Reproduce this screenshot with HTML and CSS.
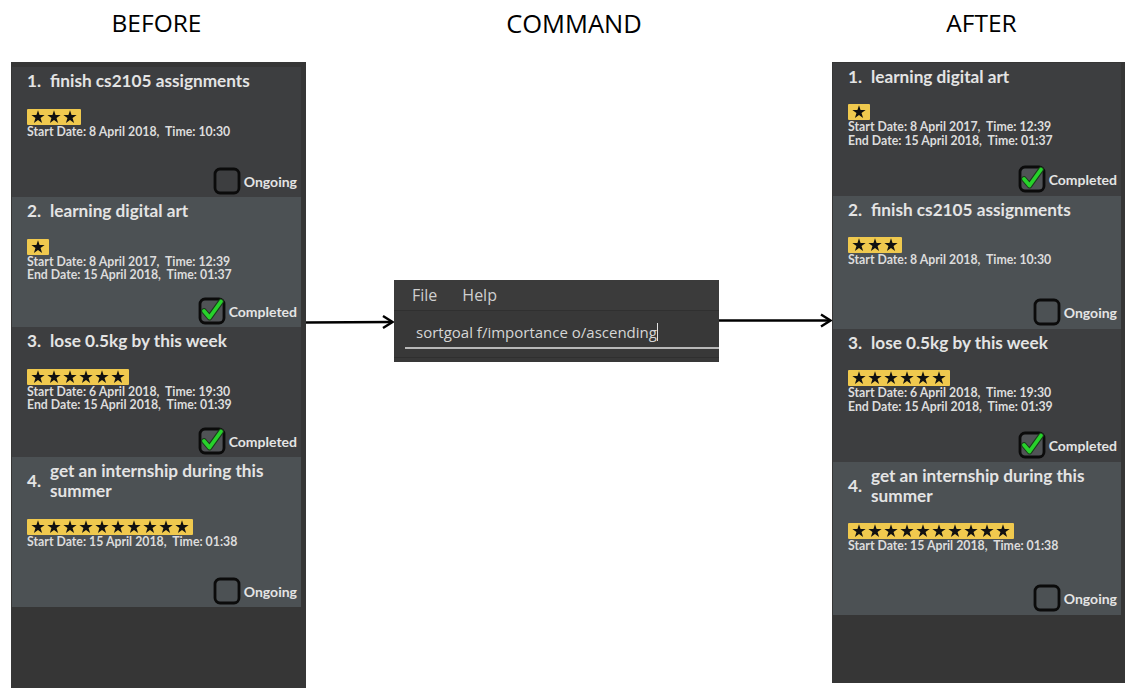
FILE: index.html
```html
<!DOCTYPE html>
<html>
<head>
<meta charset="utf-8">
<link rel="stylesheet" href="styles.css">
</head>
<body>
<svg class="defs" width="0" height="0" aria-hidden="true">
  <symbol id="star" viewBox="-0.6 -0.4 17.2 17.2"><path d="M8 1 L9.69 6.18 L15.13 6.18 L10.73 9.39 L12.41 14.57 L8 11.37 L3.59 14.57 L5.27 9.39 L0.87 6.18 L6.31 6.18 Z"/></symbol>
  <symbol id="box-empty" viewBox="0 0 28 28"><rect class="bx" x="2" y="2" width="24" height="24" rx="5"/></symbol>
  <symbol id="box-done" viewBox="0 0 28 28"><rect class="bx bx-done" x="2" y="2" width="24" height="24" rx="5"/><path class="ck-o" d="M6 14 L11.5 20.5 L23 4.5"/><path class="ck" d="M6 14 L11.5 20.5 L23 4.5"/></symbol>
</svg>
<div class="page">
  <div class="head head-before">BEFORE</div>
  <div class="head head-command">COMMAND</div>
  <div class="head head-after">AFTER</div>

  <div class="panel panel-before">
    <div class="card dark">
      <div class="title"><span class="num">1.</span><span class="name">finish cs2105 assignments</span></div>
      <div class="stars"><svg class="star"><use href="#star"/></svg><svg class="star"><use href="#star"/></svg><svg class="star"><use href="#star"/></svg></div>
      <div class="dates"><div>Start Date: 8 April 2018,&nbsp; Time: 10:30</div></div>
      <div class="status"><svg class="box"><use href="#box-empty"/></svg><span>Ongoing</span></div>
    </div>
    <div class="card light">
      <div class="title"><span class="num">2.</span><span class="name">learning digital art</span></div>
      <div class="stars"><svg class="star"><use href="#star"/></svg></div>
      <div class="dates"><div>Start Date: 8 April 2017,&nbsp; Time: 12:39</div><div>End Date: 15 April 2018,&nbsp; Time: 01:37</div></div>
      <div class="status"><svg class="box"><use href="#box-done"/></svg><span>Completed</span></div>
    </div>
    <div class="card dark">
      <div class="title"><span class="num">3.</span><span class="name">lose 0.5kg by this week</span></div>
      <div class="stars"><svg class="star"><use href="#star"/></svg><svg class="star"><use href="#star"/></svg><svg class="star"><use href="#star"/></svg><svg class="star"><use href="#star"/></svg><svg class="star"><use href="#star"/></svg><svg class="star"><use href="#star"/></svg></div>
      <div class="dates"><div>Start Date: 6 April 2018,&nbsp; Time: 19:30</div><div>End Date: 15 April 2018,&nbsp; Time: 01:39</div></div>
      <div class="status"><svg class="box"><use href="#box-done"/></svg><span>Completed</span></div>
    </div>
    <div class="card light">
      <div class="title"><span class="num">4.</span><span class="name">get an internship during this summer</span></div>
      <div class="stars"><svg class="star"><use href="#star"/></svg><svg class="star"><use href="#star"/></svg><svg class="star"><use href="#star"/></svg><svg class="star"><use href="#star"/></svg><svg class="star"><use href="#star"/></svg><svg class="star"><use href="#star"/></svg><svg class="star"><use href="#star"/></svg><svg class="star"><use href="#star"/></svg><svg class="star"><use href="#star"/></svg><svg class="star"><use href="#star"/></svg></div>
      <div class="dates"><div>Start Date: 15 April 2018,&nbsp; Time: 01:38</div></div>
      <div class="status"><svg class="box"><use href="#box-empty"/></svg><span>Ongoing</span></div>
    </div>
  </div>

  <svg class="arrow arrow-left" viewBox="0 0 88 16"><path d="M0 8.5 L86 8" /><path d="M77 2 L86.5 8 L77 14"/></svg>

  <div class="cmd">
    <div class="menubar"><span>File</span><span>Help</span></div>
    <div class="cmd-input"><span class="cmd-text">sortgoal f/importance o/ascending</span><span class="caret"></span></div>
    <div class="cmd-line"></div>
    <div class="cmd-foot"></div>
  </div>

  <svg class="arrow arrow-right" viewBox="0 0 113 16"><path d="M0 7.5 L111 7.5" /><path d="M102 1.5 L111.5 7.5 L102 13.5"/></svg>

  <div class="panel panel-after">
    <div class="card dark">
      <div class="title"><span class="num">1.</span><span class="name">learning digital art</span></div>
      <div class="stars"><svg class="star"><use href="#star"/></svg></div>
      <div class="dates"><div>Start Date: 8 April 2017,&nbsp; Time: 12:39</div><div>End Date: 15 April 2018,&nbsp; Time: 01:37</div></div>
      <div class="status"><svg class="box"><use href="#box-done"/></svg><span>Completed</span></div>
    </div>
    <div class="card light">
      <div class="title"><span class="num">2.</span><span class="name">finish cs2105 assignments</span></div>
      <div class="stars"><svg class="star"><use href="#star"/></svg><svg class="star"><use href="#star"/></svg><svg class="star"><use href="#star"/></svg></div>
      <div class="dates"><div>Start Date: 8 April 2018,&nbsp; Time: 10:30</div></div>
      <div class="status"><svg class="box"><use href="#box-empty"/></svg><span>Ongoing</span></div>
    </div>
    <div class="card dark">
      <div class="title"><span class="num">3.</span><span class="name">lose 0.5kg by this week</span></div>
      <div class="stars"><svg class="star"><use href="#star"/></svg><svg class="star"><use href="#star"/></svg><svg class="star"><use href="#star"/></svg><svg class="star"><use href="#star"/></svg><svg class="star"><use href="#star"/></svg><svg class="star"><use href="#star"/></svg></div>
      <div class="dates"><div>Start Date: 6 April 2018,&nbsp; Time: 19:30</div><div>End Date: 15 April 2018,&nbsp; Time: 01:39</div></div>
      <div class="status"><svg class="box"><use href="#box-done"/></svg><span>Completed</span></div>
    </div>
    <div class="card light">
      <div class="title"><span class="num">4.</span><span class="name">get an internship during this summer</span></div>
      <div class="stars"><svg class="star"><use href="#star"/></svg><svg class="star"><use href="#star"/></svg><svg class="star"><use href="#star"/></svg><svg class="star"><use href="#star"/></svg><svg class="star"><use href="#star"/></svg><svg class="star"><use href="#star"/></svg><svg class="star"><use href="#star"/></svg><svg class="star"><use href="#star"/></svg><svg class="star"><use href="#star"/></svg><svg class="star"><use href="#star"/></svg></div>
      <div class="dates"><div>Start Date: 15 April 2018,&nbsp; Time: 01:38</div></div>
      <div class="status"><svg class="box"><use href="#box-empty"/></svg><span>Ongoing</span></div>
    </div>
  </div>
</div>
</body>
</html>
```

FILE: styles.css
```css
* { box-sizing: border-box; }
html, body { margin: 0; padding: 0; background: #ffffff; }
body { width: 1135px; height: 694px; overflow: hidden; }
.defs { position: absolute; width: 0; height: 0; overflow: hidden; }

.page {
  display: grid;
  grid-template-columns: 295px 88px 325px 113px 293px;
  grid-template-rows: 62px auto;
  padding-left: 11px;
}

.head {
  font-family: "Open Sans", "Liberation Sans", sans-serif;
  font-size: 24.5px;
  color: #000;
  line-height: 28px;
  padding-top: 9px;
  text-align: center;
}
.head-before { grid-column: 1; grid-row: 1; padding-right: 4px; }
.head-command { grid-column: 2 / 5; grid-row: 1; padding-left: 10px; font-size: 25.5px; }
.head-after { grid-column: 5; grid-row: 1; padding-left: 6px; }

.panel {
  background: #363636;
  display: flex;
  flex-direction: column;
  padding: 5px 5px 0 1px;
  font-family: Lato, "Open Sans", sans-serif;
  color: #e4e4e4;
}
.panel-before { grid-column: 1; grid-row: 2; height: 626px; }
.panel-after { grid-column: 5; grid-row: 2; height: 621px; padding-top: 1px; padding-right: 4px; }

.card {
  display: flex;
  flex-direction: column;
  padding: 4px 4px 4px 15px;
}
.card.dark { background: #3d3e40; }
.card.light { background: #4c5154; }

.title {
  display: flex;
  align-items: center;
  font-weight: 700;
  font-size: 17.2px;
  line-height: 20px;
}
.title .num { width: 23px; flex: none; }
.title .name { max-width: 245px; }

.stars {
  align-self: flex-start;
  display: flex;
  background: #f0c94e;
  padding: 0 3px;
  margin-top: 18px;
  height: 16px;
  border-radius: 1px;
}
.star { width: 16px; height: 16px; display: block; fill: #111; }

.dates {
  font-weight: 700;
  font-size: 12.3px;
  line-height: 13px;
  min-height: 26px;
  color: #dcdcdc;
}

.status {
  display: flex;
  align-items: center;
  justify-content: flex-end;
  margin-top: 18px;
  height: 24px;
  gap: 3px;
  font-weight: 700;
  font-size: 14px;
}
.box { width: 28px; height: 28px; flex: none; }
.bx { fill: none; stroke: #0b0b0b; stroke-width: 2.8; }
.bx-done { fill: #505356; }
.ck-o { fill: none; stroke: #1a3a1a; stroke-width: 5.8; stroke-linecap: round; stroke-linejoin: round; }
.ck { fill: none; stroke: #27d22b; stroke-width: 3.8; stroke-linecap: round; stroke-linejoin: round; }

.panel-after .dates { line-height: 14px; min-height: 28px; }
.panel-after .stars { margin-top: 17px; }
.panel-after .status { margin-top: 19px; }
.panel-after .card { padding-bottom: 5px; }

.arrow { width: 100%; height: 16px; align-self: start; }
.arrow path { fill: none; stroke: #000; stroke-width: 2.4; stroke-linejoin: miter; }
.arrow-left { grid-column: 2; grid-row: 2; margin-top: 252px; }
.arrow-right { grid-column: 4; grid-row: 2; margin-top: 251px; }

.cmd {
  grid-column: 3;
  grid-row: 2;
  align-self: start;
  margin-top: 218px;
  height: 82px;
  background: #383838;
  font-family: "Open Sans", "Liberation Sans", sans-serif;
  display: flex;
  flex-direction: column;
}
.menubar {
  height: 31px;
  background: #3b3b3b;
  border-bottom: 1px solid #303030;
  display: flex;
  align-items: center;
  gap: 25px;
  padding-left: 18px;
  color: #cfcfcf;
  font-size: 16px;
}
.cmd-input {
  height: 36px;
  display: flex;
  align-items: center;
  padding-left: 22px;
  padding-top: 6px;
  color: #d6d6d6;
  font-size: 15px;
}
.caret { width: 1px; height: 18px; background: #e0e0e0; margin-left: 0; }
.cmd-line { height: 2px; background: #b8b8b8; margin-left: 11px; }
.cmd-foot { flex: 1; border-bottom: 1px solid #2f2f2f; margin-bottom: 4px; }
```
